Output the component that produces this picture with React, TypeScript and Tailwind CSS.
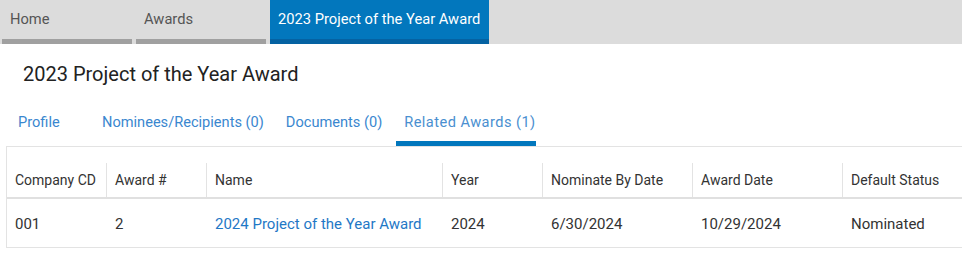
import React from 'react';

const crumbs = [
  { label: 'Home', active: false },
  { label: 'Awards', active: false },
  { label: '2023 Project of the Year Award', active: true },
];

const tabs = [
  { label: 'Profile', active: false, cls: 'ml-[10px] w-[76px]' },
  { label: 'Nominees/Recipients (0)', active: false, cls: 'ml-2' },
  { label: 'Documents (0)', active: false, cls: 'ml-[6px]' },
  { label: 'Related Awards (1)', active: true, cls: 'ml-[6px] w-[140px] tracking-[0.45px]' },
];

const columns = ['Company CD', 'Award #', 'Name', 'Year', 'Nominate By Date', 'Award Date', 'Default Status'];

const rows = [
  { company: '001', num: '2', name: '2024 Project of the Year Award', year: '2024', nominateBy: '6/30/2024', awardDate: '10/29/2024', status: 'Nominated' },
];

export default function App() {
  return (
    <div className="w-[962px] h-[263px] overflow-hidden bg-white font-['Roboto','Liberation_Sans',sans-serif] text-[#333]">
      {/* Breadcrumb bar */}
      <div className="flex h-[44px] bg-[#dcdcdc] pl-[2px] gap-1">
        {crumbs.map((c) =>
          c.active ? (
            <div key={c.label} className="flex flex-col w-[219px] bg-[#0277bd]">
              <div className="flex-1 flex items-center pl-2 text-[14.7px] text-white">{c.label}</div>
              <div className="h-[5px] bg-[#0562a2]" />
            </div>
          ) : (
            <div key={c.label} className="flex flex-col w-[130px]">
              <div className="flex-1 flex items-center pl-2 text-[14.7px] text-[#555]">{c.label}</div>
              <div className="h-[5px] bg-[#a0a0a0]" />
            </div>
          )
        )}
      </div>

      {/* Title */}
      <h1 className="pl-[23px] pt-[19px] text-[20px] leading-[22px] text-[#222]">2023 Project of the Year Award</h1>

      {/* Sub tabs */}
      <div className="flex mt-[27px] h-[34px]">
        {tabs.map((t) => (
          <div
            key={t.label}
            className={`${t.cls} flex flex-col px-2 whitespace-nowrap ${t.active ? 'text-[#4a8fd0]' : 'text-[#3a87cf]'}`}
          >
            <div className="text-[14.6px] leading-[21px]">{t.label}</div>
            <div className="flex-1" />
            <div className={`-mx-2 h-[5px] ${t.active ? 'bg-[#0277bd]' : 'bg-transparent'}`} />
          </div>
        ))}
      </div>

      {/* Table card */}
      <div className="ml-[6px] border-l border-t border-[#e3e3e3] pt-4">
        <div className="grid grid-cols-[99px_100px_236px_100px_150px_150px_1fr] border-b-2 border-[#e0e0e0] text-[14px]">
          {columns.map((col, i) => (
            <div key={col} className={`h-[34px] flex items-center px-2 ${i > 0 ? 'border-l border-[#e3e3e3]' : ''}`}>
              {col}
            </div>
          ))}
        </div>
        {rows.map((r) => (
          <div key={r.num} className="grid grid-cols-[99px_100px_236px_100px_150px_150px_1fr] border-b border-[#e3e3e3] h-[49px] pt-[2px] items-center text-[15px]">
            <div className="px-2">{r.company}</div>
            <div className="pl-[9px]">{r.num}</div>
            <div className="pl-[9px]">
              <a href="#" className="text-[#1f78c6]">{r.name}</a>
            </div>
            <div className="pl-[9px]">{r.year}</div>
            <div className="pl-[9px]">{r.nominateBy}</div>
            <div className="pl-[9px]">{r.awardDate}</div>
            <div className="pl-[9px]">{r.status}</div>
          </div>
        ))}
      </div>
    </div>
  );
}
